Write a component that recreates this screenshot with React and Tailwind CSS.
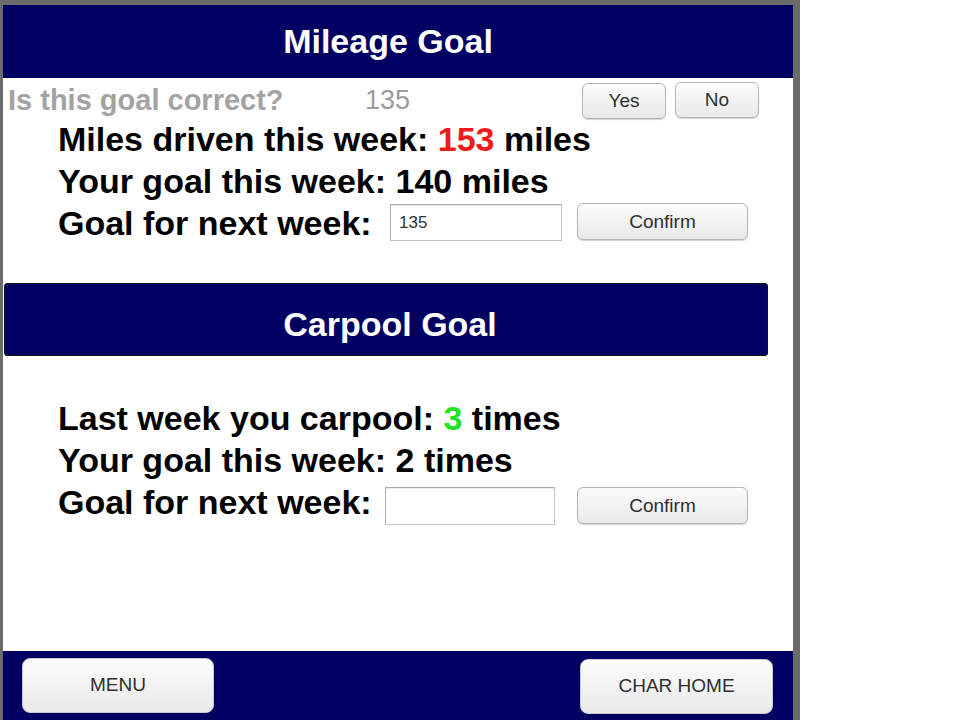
import React from "react";

const font = "font-['Liberation_Sans',Arial,Helvetica,sans-serif]";

function Btn({ className = "", children }) {
  return (
    <div
      className={
        "flex items-center justify-center rounded-[6px] border border-[#b4b4b4] bg-linear-to-b from-[#fcfcfc] to-[#e9e9e9] text-[#2e2e2e] shadow-[0_1px_1px_rgba(0,0,0,0.18)] " +
        className
      }
    >
      {children}
    </div>
  );
}

function Field({ className = "", value = "" }) {
  return (
    <div
      className={
        "flex items-center border border-[#c4c4c4] border-t-[#a8a8a8] border-l-[#b0b0b0] bg-white pl-[8px] text-[17px] text-[#333] shadow-[inset_0_1px_1px_rgba(0,0,0,0.08)] " +
        className
      }
    >
      {value}
    </div>
  );
}

export default function App() {
  return (
    <div className={"w-[960px] h-[720px] bg-white " + font}>
      <div className="w-[800px] h-[720px] bg-[#6b6b6b] pt-[5px] pl-[3px] pr-[7px]">
        <div className="flex h-full flex-col bg-white">
          {/* Mileage header */}
          <div className="flex h-[73px] shrink-0 items-center justify-center bg-[#000063] pr-[20px] text-[34px] font-bold text-white">
            Mileage Goal
          </div>

          {/* Question row */}
          <div className="flex h-[40px] shrink-0 items-start pl-[5px]">
            <span className="mt-[6px] w-[357px] text-[29px] font-bold leading-[32px] text-[#a3a3a3]">
              Is this goal correct?
            </span>
            <span className="mt-[6px] w-[217px] text-[27px] leading-[32px] text-[#9c9c9c]">
              135
            </span>
            <Btn className="mt-[5px] h-[36px] w-[84px] text-[19px]">Yes</Btn>
            <Btn className="ml-[9px] mt-[4px] h-[36px] w-[84px] text-[19px]">No</Btn>
          </div>

          {/* Mileage stats */}
          <div className="shrink-0 pl-[55px] text-[34px] font-bold leading-[42px] text-black">
            <div className="h-[42px]">
              Miles driven this week: <span className="text-[#ee1c1c]">153</span> miles
            </div>
            <div className="h-[42px]">Your goal this week: 140 miles</div>
            <div className="flex h-[42px] items-start">
              <span className="w-[332px] shrink-0">Goal for next week:</span>
              <Field className="mt-[2px] h-[37px] w-[172px] font-normal" value="135" />
              <Btn className="ml-[15px] mt-[1px] h-[37px] w-[171px] text-[19px] font-normal">Confirm</Btn>
            </div>
          </div>

          {/* Carpool header */}
          <div className="ml-[1px] mt-[39px] flex h-[73px] w-[764px] shrink-0 items-center justify-center rounded-[3px] border border-[#111] bg-[#000063] pl-[8px] pt-[10px] text-[34px] font-bold text-white">
            Carpool Goal
          </div>

          {/* Carpool stats */}
          <div className="mt-[41px] shrink-0 pl-[55px] text-[34px] font-bold leading-[42px] text-black">
            <div className="h-[42px]">
              Last week you carpool: <span className="text-[#22e022]">3</span> times
            </div>
            <div className="h-[42px]">Your goal this week: 2 times</div>
            <div className="flex h-[42px] items-start">
              <span className="w-[327px] shrink-0">Goal for next week:</span>
              <Field className="mt-[6px] h-[38px] w-[170px] font-normal" />
              <Btn className="ml-[22px] mt-[6px] h-[37px] w-[171px] text-[19px] font-normal">Confirm</Btn>
            </div>
          </div>

          <div className="flex-1" />

          {/* Footer */}
          <div className="flex h-[69px] shrink-0 items-start bg-[#000063] pl-[19px] pr-[20px] pt-[7px]">
            <Btn className="h-[55px] w-[192px] rounded-[8px] border-[#c9c9d9] text-[19px]">MENU</Btn>
            <Btn className="ml-auto mt-[1px] h-[55px] w-[193px] rounded-[8px] border-[#c9c9d9] text-[19px]">CHAR HOME</Btn>
          </div>
        </div>
      </div>
    </div>
  );
}
